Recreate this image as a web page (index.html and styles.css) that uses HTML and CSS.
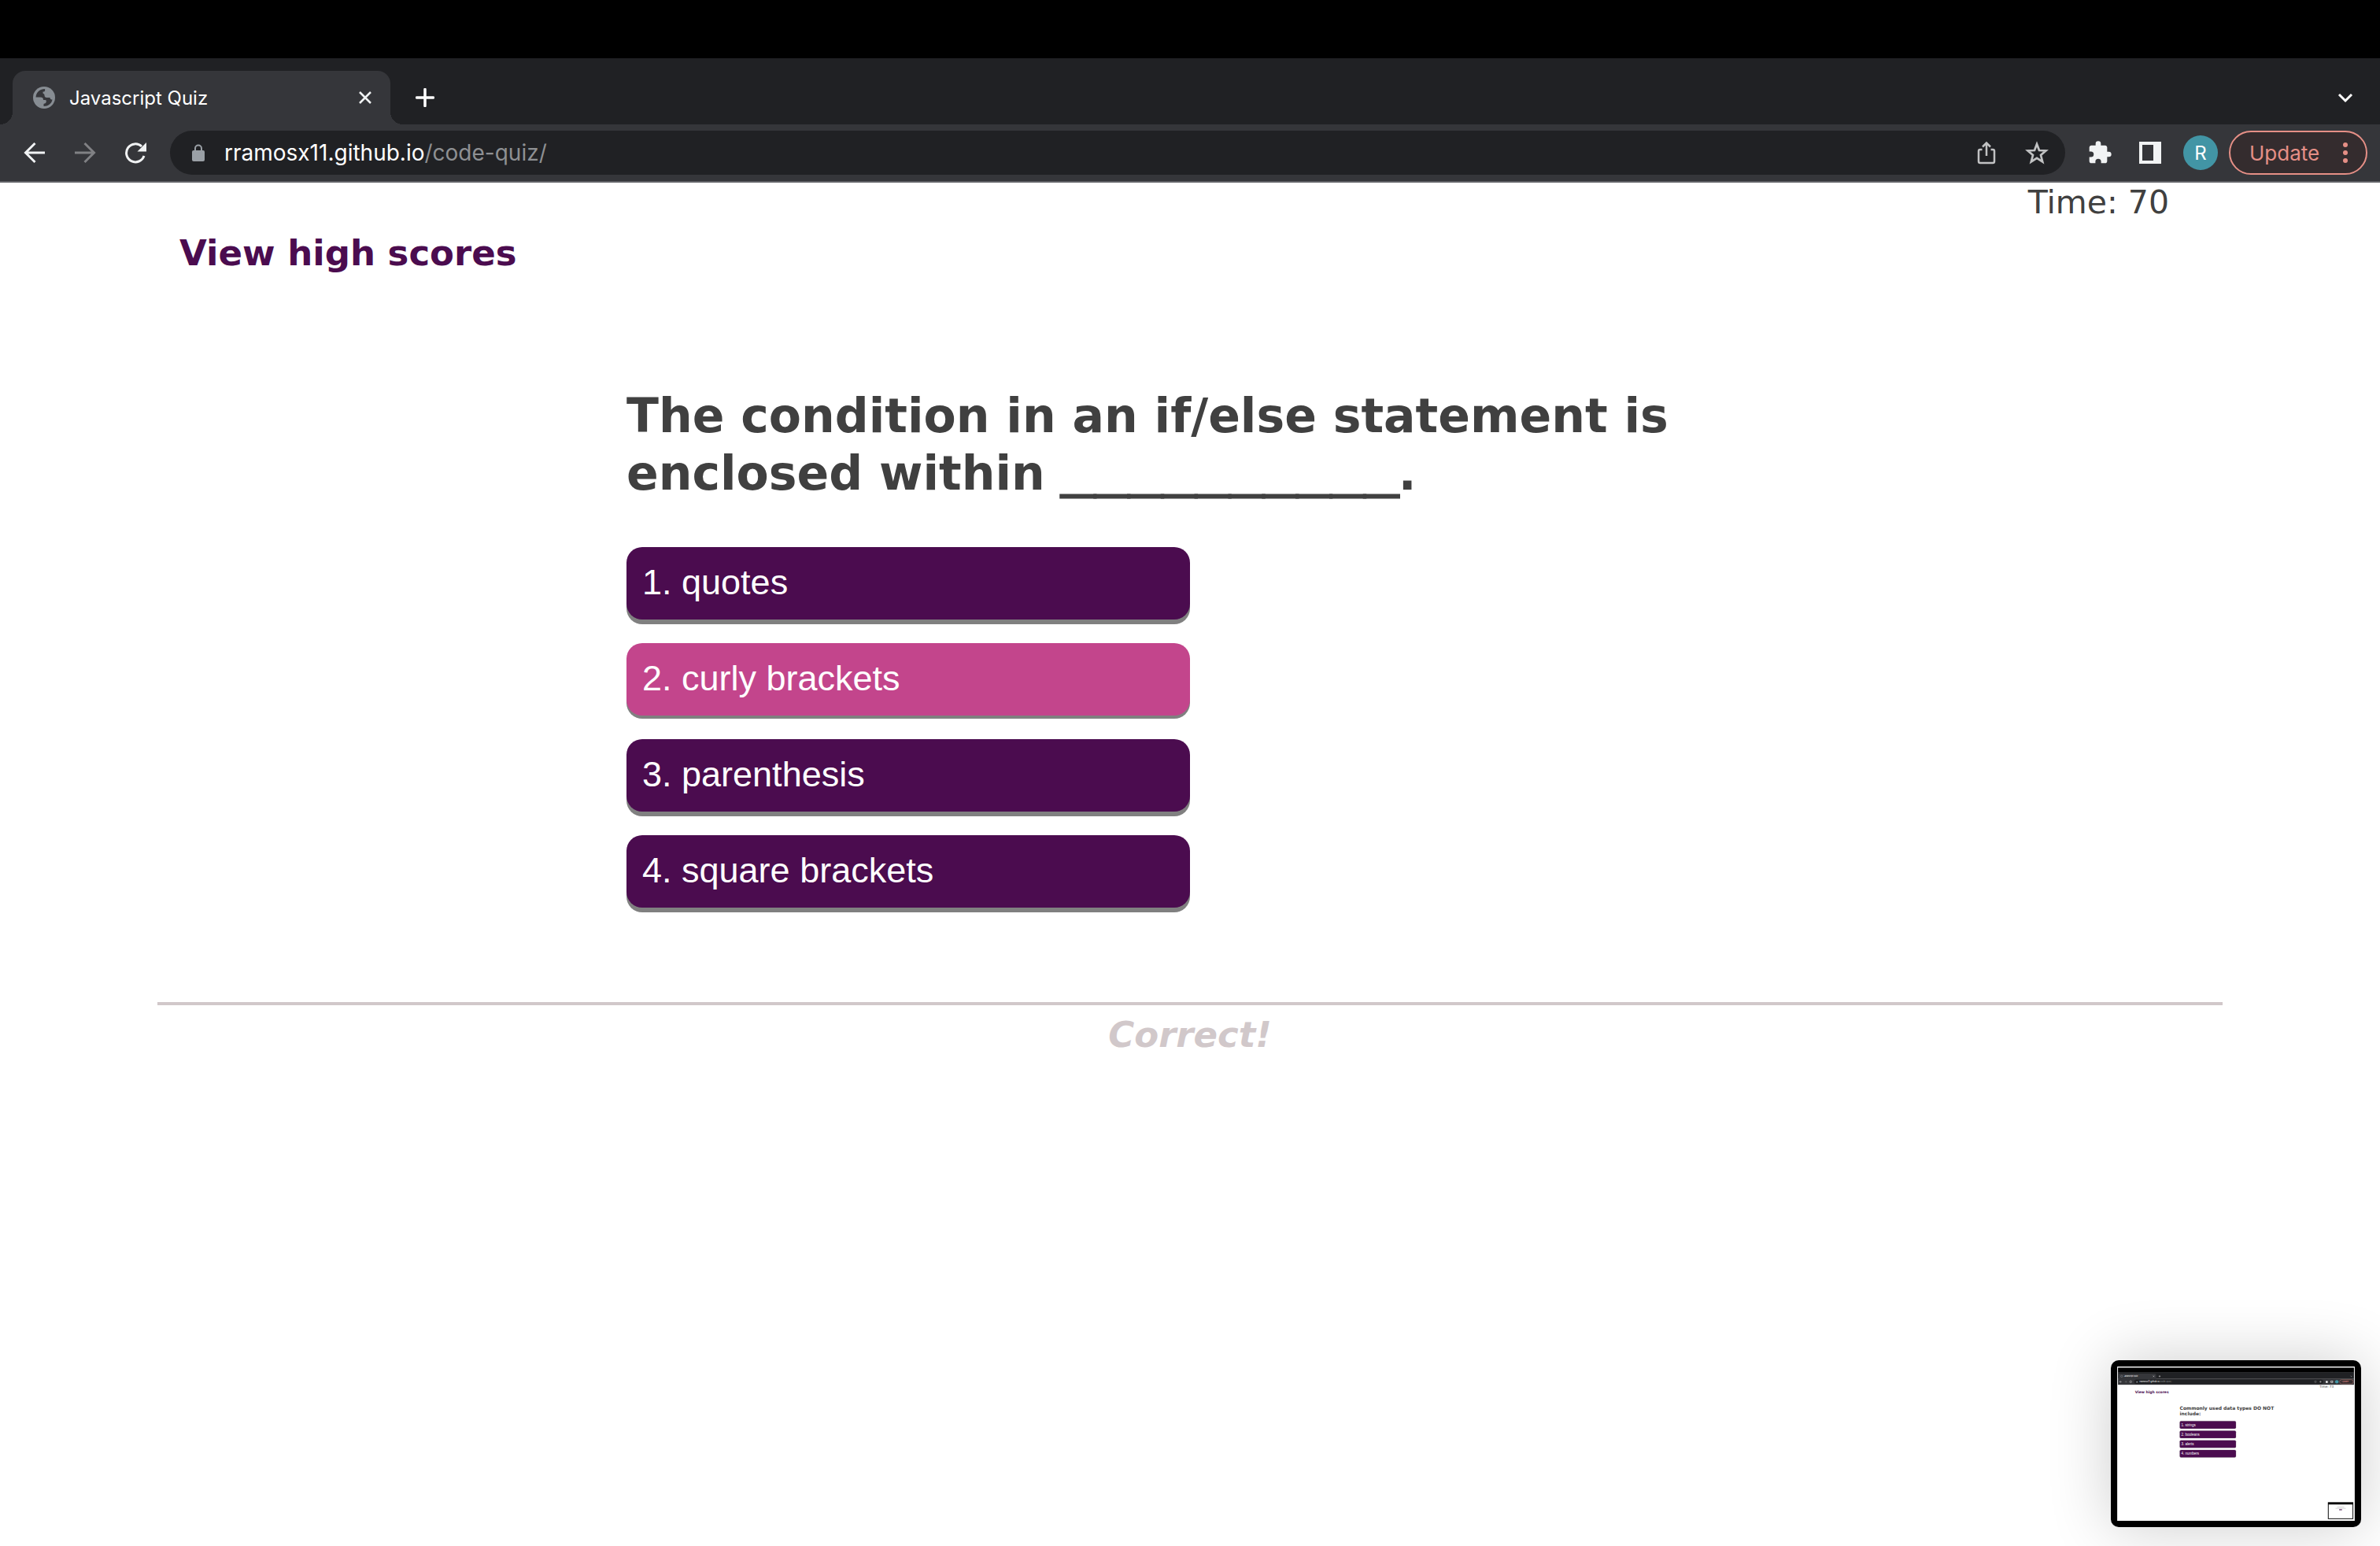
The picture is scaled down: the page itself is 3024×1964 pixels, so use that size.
FILE: index.html
```html
<!DOCTYPE html>
<html lang="en">
<head>
<meta charset="utf-8">
<title>Javascript Quiz</title>
<link rel="stylesheet" href="styles.css">
</head>
<body>
<div class="browser">
  <div class="menubar"></div>
  <div class="tabstrip">
    <div class="tab">
      <svg class="icon-28" viewBox="0 0 28 28" aria-hidden="true"><circle cx="14" cy="14" r="14" fill="#878d93"/><path d="M15 3C9 3 4 7 3.500 13.500H9c3 0 4 1 4 3.500h2.500c1.500 0 1.500 2 1 3s-1 1.500-3 2v3c5.500 0 10-3 11-8.500-1.500 0-3-.5-3-2.500h-4c-2 0-3-1-3-3 0-1.500-1-2-2-2.500V6.500h1c1.500 0 2-1.500 1.500-3.500z" fill="#35363a"/></svg>
      <span class="tab-title">Javascript Quiz</span>
      <button class="icon-button" aria-label="Close tab"><svg class="icon-16" viewBox="0 0 16 16"><path d="M1 1l14 14M15 1L1 15" stroke="#f1f3f4" stroke-width="2.500" fill="none"/></svg></button>
    </div>
    <button class="icon-button" aria-label="New tab"><svg class="icon-24" viewBox="0 0 24 24"><path d="M12 1.500v21M1.500 12h21" stroke="#fff" stroke-width="3.500" stroke-linecap="round"/></svg></button>
    <button class="icon-button tab-search" aria-label="Search tabs"><svg class="icon-20" viewBox="0 0 20 20"><path d="M2 6l8 8 8-8" stroke="#fff" stroke-width="3" fill="none"/></svg></button>
  </div>
  <div class="toolbar">
    <div class="nav">
      <button class="icon-button" aria-label="Back"><svg class="icon-28" viewBox="0 0 28 28"><path d="M27 14H3M14.500 2L2.500 14l12 12" stroke="#f1f3f4" stroke-width="3" fill="none"/></svg></button>
      <button class="icon-button" aria-label="Forward"><svg class="icon-28" viewBox="0 0 28 28"><path d="M1 14h24M13.500 2l12 12-12 12" stroke="#808184" stroke-width="3" fill="none"/></svg></button>
      <button class="icon-button" aria-label="Reload"><svg class="icon-28" viewBox="0 0 28 28"><path d="M25 18A11.500 11.500 0 1 1 22 6" stroke="#f1f3f4" stroke-width="3" fill="none"/><path d="M28 1v11.500H16.500z" fill="#f1f3f4"/></svg></button>
    </div>
    <div class="omnibox">
      <svg class="lock" viewBox="0 0 18 22" aria-hidden="true"><rect x="1" y="8" width="16" height="14" rx="2" fill="#9aa0a6"/><path d="M5 9V5.500a4 4 0 0 1 8 0V9" stroke="#9aa0a6" stroke-width="2" fill="none"/></svg>
      <div class="url">rramosx11.github.io<span class="url-path">/code-quiz/</span></div>
      <button class="icon-button" aria-label="Share"><svg class="icon-32" viewBox="0 0 32 32"><path d="M10.500 12H8a2 2 0 0 0-2 2v13a2 2 0 0 0 2 2h16a2 2 0 0 0 2-2V14a2 2 0 0 0-2-2h-2.500M16 20V4M11 8.500l5-5 5 5" stroke="#c1c2c3" stroke-width="2.500" fill="none"/></svg></button>
      <button class="icon-button" aria-label="Bookmark"><svg class="icon-32" viewBox="0 0 32 32"><path d="M16 5l3 8 8.500.5-6.500 5.500 2.200 8.500L16 22.800 8.800 27.500 11 19l-6.500-5.500L13 13z" stroke="#c1c2c3" stroke-width="2.700" fill="none"/></svg></button>
    </div>
    <div class="actions">
      <button class="icon-button" aria-label="Extensions"><svg class="icon-32" viewBox="0 0 24 24"><path d="M20.500 11H19V7c0-1.100-.9-2-2-2h-4V3.500a2.500 2.500 0 0 0-5 0V5H4c-1.100 0-2 .9-2 2v3.800h1.500a2.700 2.700 0 0 1 0 5.400H2V20c0 1.100.9 2 2 2h3.800v-1.500a2.700 2.700 0 0 1 5.400 0V22H17c1.100 0 2-.9 2-2v-4h1.500a2.500 2.500 0 0 0 0-5z" fill="#f1f3f4"/></svg></button>
      <button class="icon-button" aria-label="Side panel"><svg class="icon-32" viewBox="0 0 32 32"><path fill-rule="evenodd" d="M2 2h28v28H2zM6 6v20h14V6z" fill="#f1f3f4"/></svg></button>
      <button class="avatar" aria-label="Profile">R</button>
      <button class="update">Update<svg class="dots" viewBox="0 0 8 28"><circle cx="4" cy="4" r="3" fill="#e58f86"/><circle cx="4" cy="14" r="3" fill="#e58f86"/><circle cx="4" cy="24" r="3" fill="#e58f86"/></svg></button>
    </div>
  </div>
</div>

<header class="page-header">
  <p class="timer">Time: 70</p>
  <a class="scores" href="#">View high scores</a>
</header>

<main>
  <section class="question">
    <h1>The condition in an if/else statement is enclosed within <span class="blank">__________</span>.</h1>
    <div class="answers">
      <button class="answer">1. quotes</button>
      <button class="answer chosen">2. curly brackets</button>
      <button class="answer">3. parenthesis</button>
      <button class="answer">4. square brackets</button>
    </div>
  </section>
  <p class="result">Correct!</p>
</main>

<div class="preview">
  <svg class="preview-image" viewBox="0 0 3024 1964" role="img" aria-label="Screenshot preview">
    <rect width="3024" height="1964" fill="#fff"/>
    <rect y="14" x="10" width="3004" height="64" fill="#000"/>
    <rect x="10" y="74" width="3004" height="84" fill="#202124"/>
    <rect x="10" y="158" width="3004" height="74" fill="#35363a"/>
    <path d="M16 160v-54q0-16 16-16h448q16 0 16 16v54z" fill="#35363a"/>
    <rect x="216" y="166" width="2408" height="56" rx="28" fill="#202124"/>
    <circle cx="56" cy="124" r="12" fill="none" stroke="#878d93" stroke-width="5"/>
    <g font-family="Inter, sans-serif" fill="#fff">
      <text x="88" y="133" font-size="24">Javascript Quiz</text>
      <text x="284" y="204" font-size="28">rramosx11.github.io<tspan fill="#8e9093">/code-quiz/</tspan></text>
    </g>
    <path d="M456 116l16 16M472 116l-16 16M528 124h24M540 112v24M2972 120l8 8 8-8M56 194H32l12-12M32 194l12 12" stroke="#fff" stroke-width="4" fill="none"/>
    <path d="M96 194h24l-12-12M120 194l-12 12" stroke="#808184" stroke-width="4" fill="none"/>
    <circle cx="172" cy="194" r="12" stroke="#fff" stroke-width="4" fill="none"/>
    <rect x="244" y="190" width="16" height="14" fill="#9aa0a6"/>
    <rect x="2514" y="188" width="20" height="20" fill="none" stroke="#aaa" stroke-width="3"/>
    <path d="M2588 180l14 14-14 14-14-14z" fill="#888"/>
    <rect x="2656" y="184" width="24" height="24" fill="#fff"/>
    <rect x="2722" y="184" width="22" height="22" fill="none" stroke="#fff" stroke-width="6"/>
    <circle cx="2796" cy="194" r="22" fill="#4295a5"/>
    <rect x="2832" y="167" width="174" height="54" rx="27" fill="#342c2e" stroke="#e58f86" stroke-width="4"/>
    <text x="2858" y="204" font-size="25" font-family="Inter, sans-serif" fill="#e58f86">Update</text>
    <g font-family="DejaVu Sans, sans-serif">
      <text x="2576" y="272" font-size="41" fill="#404040">Time: 73</text>
      <g font-weight="bold">
        <text x="228" y="338" font-size="45" fill="#4b0c4f">View high scores</text>
        <text x="796" y="550" font-size="60" fill="#404040">Commonly used data types DO NOT</text>
        <text x="796" y="622" font-size="60" fill="#404040">include:</text>
      </g>
    </g>
    <g fill="#4b0c4f" stroke="#808080" stroke-width="3">
      <rect x="796" y="695" width="716" height="96" rx="16"/>
      <rect x="796" y="817" width="716" height="96" rx="16"/>
      <rect x="796" y="939" width="716" height="96" rx="16"/>
      <rect x="796" y="1061" width="716" height="96" rx="16"/>
    </g>
    <g font-family="Liberation Sans, sans-serif" font-size="45" fill="#fff">
      <text x="816" y="757">1. strings</text>
      <text x="816" y="879">2. booleans</text>
      <text x="816" y="1001">3. alerts</text>
      <text x="816" y="1123">4. numbers</text>
    </g>
    <rect x="2688" y="1734" width="312" height="204" fill="#fff" stroke="#333" stroke-width="12"/>
    <rect x="2684" y="1730" width="320" height="26" fill="#000"/>
    <path d="M2800 1788h90M2780 1806h130" stroke="#bbb" stroke-width="6"/>
    <rect x="2826" y="1816" width="36" height="14" fill="#6f4373"/>
  </svg>
</div>
</body>
</html>
```
FILE: styles.css
```css
* {
  box-sizing: border-box;
}

body {
  margin: 0;
  background: #fff;
  color: #404040;
  font-family: Verdana, "DejaVu Sans", sans-serif;
}

button {
  font: inherit;
  color: inherit;
  border: 0;
  cursor: pointer;
}

p,
h1 {
  margin: 0;
}

svg {
  display: block;
  flex: none;
}

.icon-16 { width: 16px; height: 16px; }
.icon-20 { width: 20px; height: 20px; }
.icon-24 { width: 24px; height: 24px; }
.icon-28 { width: 28px; height: 28px; }
.icon-32 { width: 32px; height: 32px; }

.icon-button {
  padding: 0;
  background: none;
}

/* Browser window */
.browser {
  font-family: Inter, sans-serif;
  color: #fff;
}

.menubar {
  height: 74px;
  background: #000;
}

.tabstrip {
  display: flex;
  align-items: center;
  gap: 32px;
  height: 84px;
  padding: 16px 34px 0 16px;
  background: #202124;
}

.tab {
  position: relative;
  display: flex;
  align-items: center;
  gap: 18px;
  width: 480px;
  height: 68px;
  padding: 0 24px 0 26px;
  border-radius: 16px 16px 0 0;
  background: #35363a;
}

.tab::before,
.tab::after {
  content: "";
  position: absolute;
  bottom: 0;
  width: 16px;
  height: 16px;
}

.tab::before {
  right: 100%;
  background: radial-gradient(circle at 0 0, transparent 16px, #35363a 16px);
}

.tab::after {
  left: 100%;
  background: radial-gradient(circle at 100% 0, transparent 16px, #35363a 16px);
}

.tab-title {
  flex: 1;
  font-size: 24px;
}

.tab-search {
  margin-left: auto;
}

.toolbar {
  display: flex;
  align-items: center;
  height: 74px;
  padding: 0 16px 0 30px;
  background: #35363a;
  border-bottom: 2px solid #606166;
}

.nav {
  display: flex;
  gap: 36px;
  margin-right: 30px;
}

.omnibox {
  display: flex;
  flex: 1;
  align-items: center;
  gap: 32px;
  height: 56px;
  padding: 0 20px 0 27px;
  border-radius: 28px;
  background: #202124;
}

.lock {
  width: 18px;
  height: 22px;
}

.url {
  flex: 1;
  margin-left: -8px;
  font-size: 28px;
}

.url-path {
  color: #8e9093;
}

.actions {
  display: flex;
  align-items: center;
  gap: 32px;
  margin-left: 28px;
}

.avatar {
  width: 44px;
  height: 44px;
  margin-left: -6px;
  padding: 0;
  border-radius: 50%;
  background: #4295a5;
  font-size: 24px;
}

.update {
  display: flex;
  align-items: center;
  justify-content: space-between;
  width: 176px;
  height: 56px;
  margin-left: -18px;
  padding: 0 22px 0 24px;
  border: 2px solid #e58f86;
  border-radius: 28px;
  background: #342c2e;
  color: #e58f86;
  font-size: 26px;
}

.dots {
  width: 8px;
  height: 28px;
}

/* Quiz page */
.page-header {
  display: flex;
  flex-direction: column;
  padding: 0 268px 0 228px;
}

.timer {
  align-self: flex-end;
  font-size: 41px;
  line-height: 50px;
}

.scores {
  align-self: flex-start;
  margin-top: 12px;
  color: #4b0c4f;
  font-size: 45px;
  font-weight: bold;
  line-height: 56px;
  text-decoration: none;
}

.question {
  max-width: 1432px;
  margin: 142px auto 0;
}

h1 {
  font-size: 60px;
  line-height: 73px;
}

.blank {
  font-family: "Liberation Sans", sans-serif;
  font-size: 77px;
  line-height: 0;
  -webkit-text-stroke: 3px #404040;
}

.answers {
  display: grid;
  gap: 30px;
  width: 50%;
  margin-top: 57px;
}

.answer {
  height: 92px;
  padding: 0 20px 2px;
  border-radius: 20px;
  background: #4b0c4f;
  box-shadow: 0 6px #808080;
  color: #fff;
  font-family: "Liberation Sans", Arial, sans-serif;
  font-size: 45px;
  text-align: left;
}

.chosen {
  background: #c3458c;
  box-shadow: 0 4px #808080;
}

.result {
  margin: 120px 200px 0;
  padding-top: 10px;
  border-top: 4px solid #d1c8ca;
  color: #d1c8ca;
  font-size: 45px;
  font-style: italic;
  font-weight: bold;
  line-height: 56px;
  text-align: center;
}

/* Floating screenshot preview */
.preview {
  position: fixed;
  right: 24px;
  bottom: 24px;
  padding: 8px;
  border-radius: 10px;
  background: #000;
  box-shadow: 0 0 80px rgba(0, 0, 0, 0.2);
}

.preview-image {
  width: 302px;
  height: 196px;
}
```
